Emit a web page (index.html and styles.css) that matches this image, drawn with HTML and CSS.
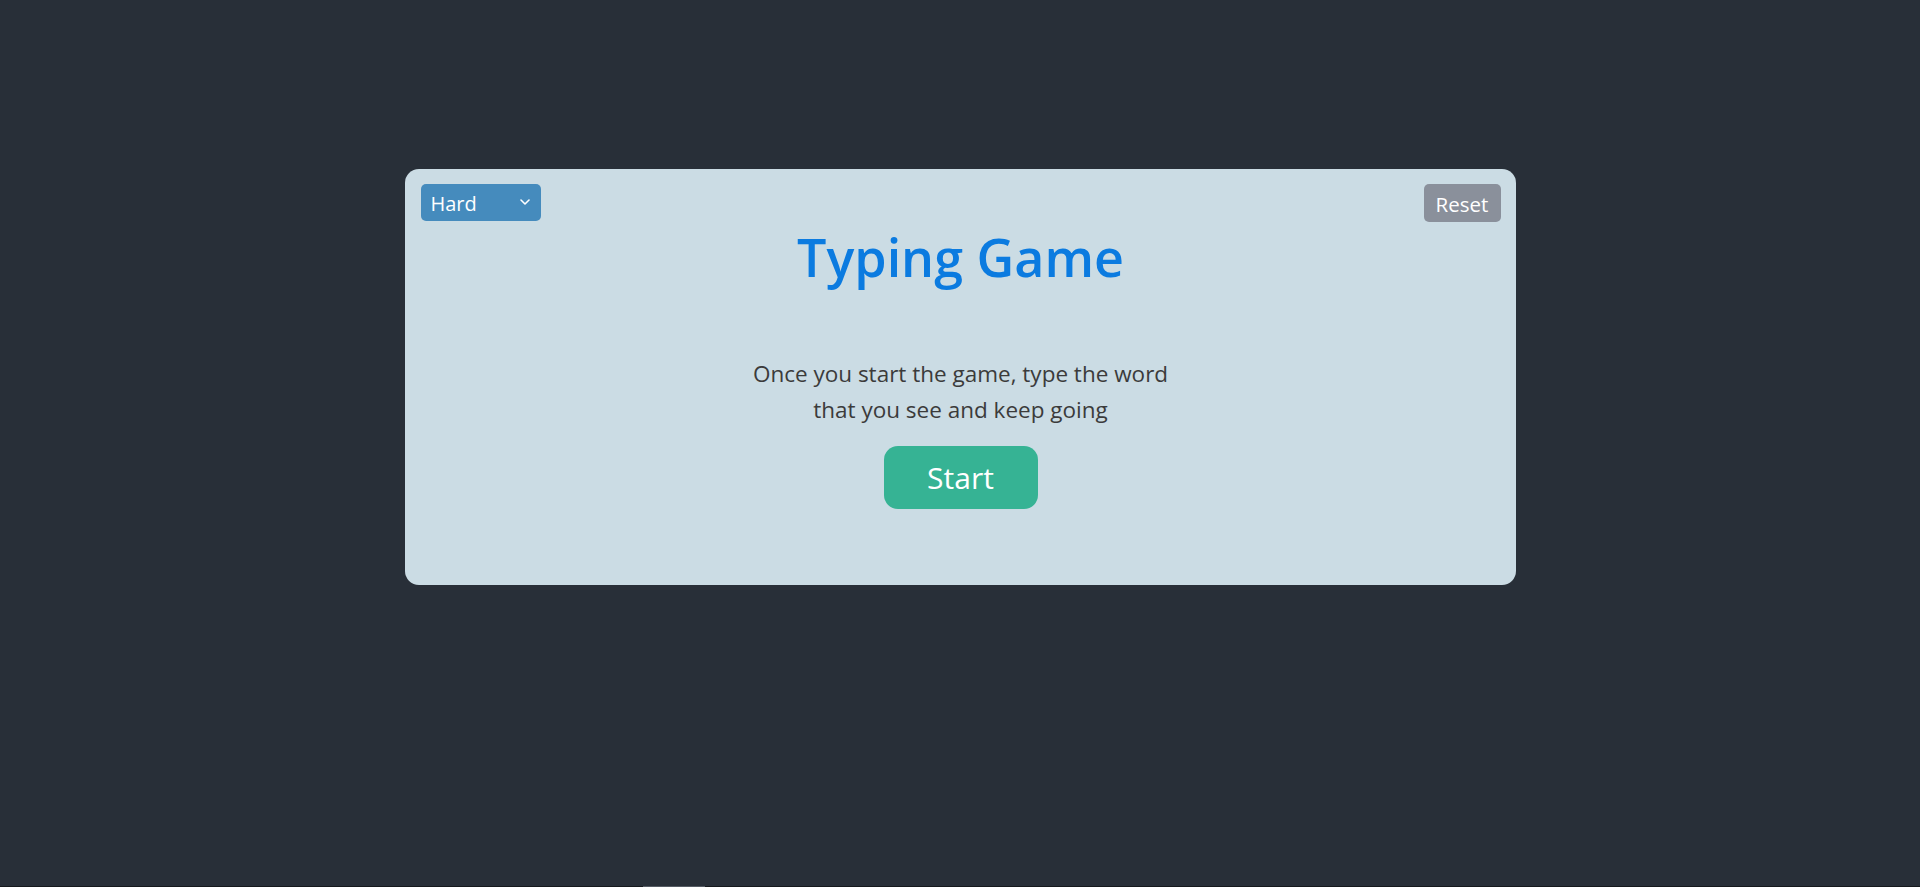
FILE: index.html
```html
<!DOCTYPE html>
<html lang="en">
<head>
<meta charset="utf-8">
<title>Typing Game</title>
<link rel="stylesheet" href="styles.css">
</head>
<body>
<main class="page">
  <section class="card">
    <div class="toolbar">
      <div class="select-wrap">
        <select class="difficulty">
          <option>Easy</option>
          <option>Medium</option>
          <option selected>Hard</option>
        </select>
        <svg class="chevron" width="10" height="6" viewBox="0 0 10 6"><path d="M1 1l4 4 4-4" fill="none" stroke="#fff" stroke-width="1.6" stroke-linecap="round" stroke-linejoin="round"/></svg>
      </div>
      <button class="reset">Reset</button>
    </div>
    <h1 class="title">Typing Game</h1>
    <p class="intro">Once you start the game, type the word that you see and keep going</p>
    <button class="start">Start</button>
  </section>
</main>
<div class="bottom-bar"><span class="bottom-thumb"></span></div>
</body>
</html>
```
FILE: styles.css
```css
html, body {
  margin: 0;
  height: 100%;
}
body {
  background: #282f38;
  font-family: "Open Sans", "Noto Sans", sans-serif;
  color: #3b3b3b;
  overflow: hidden;
}
.page {
  display: flex;
  justify-content: center;
  padding-top: 169px;
}
.card {
  width: 1111px;
  height: 416px;
  box-sizing: border-box;
  background: #cbdce4;
  border-radius: 14px;
  padding: 15px 15px 0 16px;
  display: flex;
  flex-direction: column;
  align-items: center;
}
.toolbar {
  align-self: stretch;
  display: flex;
  justify-content: space-between;
  align-items: flex-start;
}
.select-wrap {
  position: relative;
  width: 120px;
  height: 37px;
}
.difficulty {
  appearance: none;
  -webkit-appearance: none;
  width: 100%;
  height: 100%;
  border: none;
  border-radius: 5px;
  background: #458bbd;
  color: #fff;
  font-family: inherit;
  font-size: 20px;
  padding: 2px 0 0 10px;
  outline: none;
}
.chevron {
  position: absolute;
  right: 11px;
  top: 15px;
  pointer-events: none;
}
.reset {
  width: 77px;
  height: 38px;
  border: none;
  border-radius: 5px;
  background: #8a909b;
  color: #fff;
  font-family: inherit;
  font-size: 20.5px;
  padding: 2px 0 0;
}
.title {
  margin: 0;
  font-size: 52px;
  font-weight: 600;
  line-height: 70px;
  color: #0b7be0;
}
.intro {
  margin: 64px 0 0;
  width: 430px;
  text-align: center;
  font-size: 22.5px;
  line-height: 36px;
}
.start {
  margin-top: 18px;
  width: 154px;
  height: 63px;
  border: none;
  border-radius: 14px;
  background: #36b394;
  color: #fff;
  font-family: inherit;
  font-size: 30px;
  padding: 0;
}
.bottom-bar {
  position: fixed;
  left: 0;
  right: 0;
  bottom: 0;
  height: 1px;
  background: #16191d;
}
.bottom-thumb {
  position: absolute;
  left: 643px;
  width: 62px;
  top: 0;
  height: 1px;
  background: #555b63;
}
```
